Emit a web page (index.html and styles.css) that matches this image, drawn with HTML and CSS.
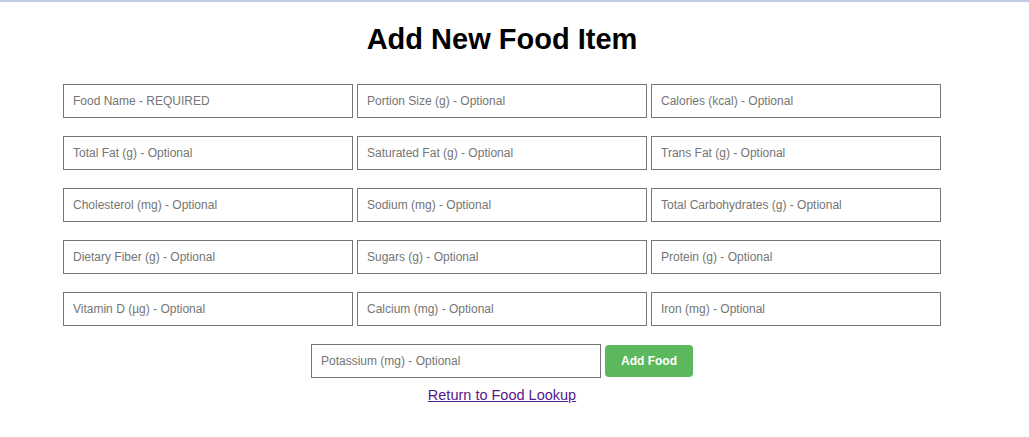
FILE: index.html
```html
<!DOCTYPE html>
<html lang="en">
<head>
<meta charset="utf-8">
<title>Add New Food Item</title>
<link rel="stylesheet" href="styles.css">
</head>
<body>
<div class="topbar"></div>
<main class="page">
  <h1 class="title">Add New Food Item</h1>
  <form class="form">
    <div class="row">
      <input class="field" type="text" placeholder="Food Name - REQUIRED">
      <input class="field" type="text" placeholder="Portion Size (g) - Optional">
      <input class="field" type="text" placeholder="Calories (kcal) - Optional">
    </div>
    <div class="row">
      <input class="field" type="text" placeholder="Total Fat (g) - Optional">
      <input class="field" type="text" placeholder="Saturated Fat (g) - Optional">
      <input class="field" type="text" placeholder="Trans Fat (g) - Optional">
    </div>
    <div class="row">
      <input class="field" type="text" placeholder="Cholesterol (mg) - Optional">
      <input class="field" type="text" placeholder="Sodium (mg) - Optional">
      <input class="field" type="text" placeholder="Total Carbohydrates (g) - Optional">
    </div>
    <div class="row">
      <input class="field" type="text" placeholder="Dietary Fiber (g) - Optional">
      <input class="field" type="text" placeholder="Sugars (g) - Optional">
      <input class="field" type="text" placeholder="Protein (g) - Optional">
    </div>
    <div class="row">
      <input class="field" type="text" placeholder="Vitamin D (µg) - Optional">
      <input class="field" type="text" placeholder="Calcium (mg) - Optional">
      <input class="field" type="text" placeholder="Iron (mg) - Optional">
    </div>
    <div class="row row-last">
      <input class="field" type="text" placeholder="Potassium (mg) - Optional">
      <button class="btn" type="button">Add Food</button>
    </div>
  </form>
  <a class="back" href="#">Return to Food Lookup</a>
</main>
</body>
</html>
```
FILE: styles.css
```css
html, body {
  margin: 0;
  padding: 0;
  background: #fff;
}
body {
  font-family: "Liberation Sans", Arial, sans-serif;
  color: #000;
}
.topbar {
  height: 2px;
  background: #c2cbea;
}
.page {
  display: flex;
  flex-direction: column;
  align-items: center;
  padding-right: 25px;
}
.title {
  margin: 21px 0 0;
  font-size: 29px;
  line-height: 33px;
  font-weight: bold;
}
.form {
  margin-top: 28px;
  display: flex;
  flex-direction: column;
  gap: 18px;
}
.row {
  display: flex;
  justify-content: center;
  align-items: center;
  gap: 4px;
}
.field {
  box-sizing: border-box;
  width: 290px;
  height: 34px;
  margin: 0;
  padding: 0 9px;
  border: 1px solid #767676;
  border-radius: 0;
  font-family: "Liberation Sans", Arial, sans-serif;
  font-size: 12px;
  color: #333;
  background: #fff;
}
.field::placeholder {
  color: #757575;
  opacity: 1;
}
.btn {
  box-sizing: border-box;
  width: 88px;
  height: 32px;
  margin: 0;
  border: none;
  border-radius: 4px;
  background: #5cb85c;
  color: #fff;
  font-family: "Liberation Sans", Arial, sans-serif;
  font-size: 12px;
  font-weight: bold;
  cursor: pointer;
}
.back {
  margin-top: 9px;
  font-size: 14.5px;
  line-height: 16px;
  color: #551a8b;
  text-decoration: underline;
}
```
